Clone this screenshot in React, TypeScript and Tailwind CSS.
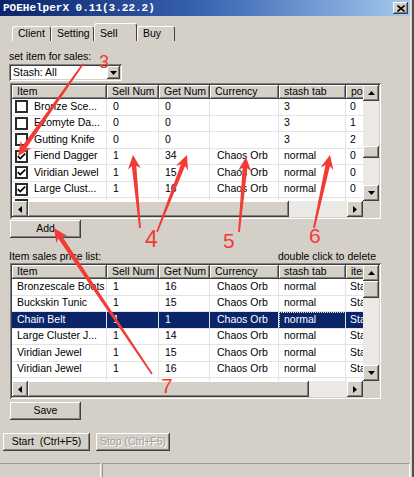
import React from "react";

const raised =
  "bg-[#d4d0c8] shadow-[inset_-1px_-1px_0_#404040,inset_1px_1px_0_#ffffff,inset_-2px_-2px_0_#808080]";
const sunken =
  "shadow-[inset_1px_1px_0_#808080,inset_-1px_-1px_0_#ffffff,inset_2px_2px_0_#404040,inset_-2px_-2px_0_#d4d0c8]";
const track = "bg-[#ebe9e5]";

const colW = ["w-[95px]", "w-[52px]", "w-[51px]", "w-[69px]", "w-[67px]", "w-[40px]"];
const colPad = ["pl-[5px]", "pl-[6px]", "pl-[6px]", "pl-[7px]", "pl-[5px]", "pl-[4px]"];

type Row = { cells: string[]; checked?: boolean; selected?: boolean; focus?: number };

const stashRows: Row[] = [
  { cells: ["Bronze Sce...", "0", "0", "", "3", "0"] },
  { cells: ["Ezomyte Da...", "0", "0", "", "3", "1"] },
  { cells: ["Gutting Knife", "0", "0", "", "3", "2"] },
  { cells: ["Fiend Dagger", "1", "34", "Chaos Orb", "normal", "0"], checked: true },
  { cells: ["Viridian Jewel", "1", "15", "Chaos Orb", "normal", "0"], checked: true },
  { cells: ["Large Clust...", "1", "16", "Chaos Orb", "normal", "0"], checked: true },
  { cells: ["Viridian Jewel", "1", "15", "Chaos Orb", "normal", "0"], checked: true },
];

const priceRows: Row[] = [
  { cells: ["Bronzescale Boots", "1", "16", "Chaos Orb", "normal", "Stash"] },
  { cells: ["Buckskin Tunic", "1", "15", "Chaos Orb", "normal", "Stash"] },
  { cells: ["Chain Belt", "1", "1", "Chaos Orb", "normal", "Stash"], selected: true, focus: 4 },
  { cells: ["Large Cluster J...", "1", "14", "Chaos Orb", "normal", "Stash"] },
  { cells: ["Viridian Jewel", "1", "15", "Chaos Orb", "normal", "Stash"] },
  { cells: ["Viridian Jewel", "1", "16", "Chaos Orb", "normal", "Stash"] },
  { cells: ["Fiend Dagger", "1", "34", "Chaos Orb", "normal", "Stash"] },
];

const Tri = ({ dir }: { dir: "up" | "down" | "left" | "right" }) => {
  const d = {
    up: "M3.5 0 L7 4 L0 4 Z",
    down: "M0 0 L7 0 L3.5 4 Z",
    left: "M0 3.5 L4 0 L4 7 Z",
    right: "M0 0 L4 3.5 L0 7 Z",
  }[dir];
  const horiz = dir === "left" || dir === "right";
  return (
    <svg width={horiz ? 4 : 7} height={horiz ? 7 : 4} viewBox={horiz ? "0 0 4 7" : "0 0 7 4"}>
      <path d={d} fill="#000" />
    </svg>
  );
};

const ScrollBtn = ({ dir }: { dir: "up" | "down" | "left" | "right" }) => (
  <div className={`w-[16px] h-[16px] shrink-0 flex items-center justify-center ${raised}`}>
    <Tri dir={dir} />
  </div>
);

const CheckBox = ({ checked }: { checked?: boolean }) => (
  <div className="w-[13px] h-[13px] shrink-0 border-2 border-[#2b2b2b] bg-white flex items-center justify-center">
    {checked && (
      <svg width="9" height="7" viewBox="0 0 9 7">
        <path d="M0.8 3.2 L3.2 5.6 L8.2 0.6" stroke="#000" strokeWidth="1.8" fill="none" />
      </svg>
    )}
  </div>
);

const ListTable = ({
  headers,
  rows,
  checks,
  gap,
  thumb,
  hThumb,
}: {
  headers: string[];
  rows: Row[];
  checks?: boolean;
  gap: string;
  thumb: string;
  hThumb: string;
}) => (
  <div className={`ml-[10px] w-[371px] h-[136px] p-[2px] bg-white flex flex-col ${sunken}`}>
    <div className="flex flex-1 min-h-0">
      <div className="flex-1 min-w-0 overflow-hidden flex flex-col">
        <div className="flex h-[14px] shrink-0">
          {headers.map((h, i) => (
            <div
              key={h}
              className={`${colW[i]} shrink-0 h-full flex items-center pl-[5px] overflow-hidden whitespace-nowrap ${raised}`}
            >
              {h}
            </div>
          ))}
        </div>
        {rows.map((r, ri) => (
          <div
            key={ri}
            className={`flex h-[16.5px] shrink-0 ${r.selected ? "bg-[#0a246a] text-white" : "bg-white text-black"}`}
          >
            {r.cells.map((c, i) => (
              <div
                key={i}
                className={`${colW[i]} shrink-0 h-full flex items-center border-r border-b border-[#e3e3e3] overflow-hidden whitespace-nowrap ${
                  i === 0 && checks ? "pl-[3px] gap-[6px]" : colPad[i]
                } ${r.focus === i ? "outline-1 outline-dotted outline-[#e8e4b0] -outline-offset-1" : ""}`}
              >
                {i === 0 && checks && <CheckBox checked={r.checked} />}
                {c}
              </div>
            ))}
          </div>
        ))}
      </div>
      <div className="w-[16px] shrink-0 flex flex-col">
        <ScrollBtn dir="up" />
        <div className={`flex-1 flex flex-col ${track}`}>
          <div className={gap} />
          <div className={`${thumb} ${raised}`} />
        </div>
        <ScrollBtn dir="down" />
      </div>
    </div>
    <div className="flex h-[16px] shrink-0">
      <ScrollBtn dir="left" />
      <div className={`${hThumb} ${raised}`} />
      <div className={`flex-1 ${track}`} />
      <ScrollBtn dir="right" />
      <div className="w-[16px] bg-[#d4d0c8]" />
    </div>
  </div>
);

const Button = ({ w, children, disabled }: { w: string; children: React.ReactNode; disabled?: boolean }) => (
  <div
    className={`${w} h-[18px] flex items-center justify-center whitespace-pre ${raised} ${
      disabled ? "text-[#a0a0a0] [text-shadow:1px_1px_0_#ffffff]" : "text-black"
    }`}
  >
    {children}
  </div>
);

const Tab = ({ label, w, active }: { label: string; w: string; active?: boolean }) => (
  <div
    className={`${w} flex pl-[5px] rounded-t-[3px] border-t border-l border-white border-r border-r-[#404040] bg-[#d4d0c8] ${
      active ? "h-[18px] items-start pt-[2px] z-10" : "h-[15px] items-center"
    }`}
  >
    {label}
  </div>
);

function arrow(x1: number, y1: number, x2: number, y2: number) {
  const dx = x2 - x1;
  const dy = y2 - y1;
  const len = Math.hypot(dx, dy);
  const ux = dx / len;
  const uy = dy / len;
  const nx = -uy;
  const ny = ux;
  const headLen = 14;
  const headW = 6.5;
  const w0 = 0.9;
  const w1 = 2.3;
  const hx = x2 - ux * headLen;
  const hy = y2 - uy * headLen;
  const bx = x2 - ux * (headLen - 3);
  const by = y2 - uy * (headLen - 3);
  const pts = [
    [x1 + nx * w0, y1 + ny * w0],
    [bx + nx * w1, by + ny * w1],
    [hx + nx * headW, hy + ny * headW],
    [x2, y2],
    [hx - nx * headW, hy - ny * headW],
    [bx - nx * w1, by - ny * w1],
    [x1 - nx * w0, y1 - ny * w0],
  ];
  return pts.map((p) => `${p[0].toFixed(1)},${p[1].toFixed(1)}`).join(" ");
}

const arrows: [number, number, number, number][] = [
  [83, 64, 18, 156],
  [140, 228, 133, 155],
  [157, 232, 187, 155],
  [239, 232, 246, 157],
  [314, 228, 330, 155],
  [152, 374, 54, 228],
];

const labels = [
  { t: "3", x: 99, y: 68, s: 18 },
  { t: "4", x: 145, y: 247, s: 23 },
  { t: "5", x: 223, y: 248, s: 21 },
  { t: "6", x: 309, y: 243, s: 21 },
  { t: "7", x: 161, y: 393, s: 21 },
];

export default function App() {
  return (
    <div className="relative w-[414px] h-[477px] overflow-hidden bg-[#d4d0c8] flex font-['Liberation_Sans',Arial,sans-serif] text-[10.5px] text-black">
      <div className="w-[410px] flex flex-col">
        {/* title bar */}
        <div className="h-[16px] shrink-0 flex items-center justify-between pl-[3px] pr-[2px] bg-linear-to-r from-[#0a246a] via-[#3a64b0] to-[#a6caf0]">
          <span className="font-['Liberation_Mono',monospace] font-bold text-[11px] text-white leading-none">
            POEHelperX 0.11(3.22.2)
          </span>
          <div className={`w-[15px] h-[12px] flex items-center justify-center ${raised}`}>
            <svg width="8" height="7" viewBox="0 0 8 7">
              <path d="M0.5 0.5 L7.5 6.5 M7.5 0.5 L0.5 6.5" stroke="#000" strokeWidth="1.6" />
            </svg>
          </div>
        </div>

        {/* tabs */}
        <div className="h-[25px] shrink-0 flex items-end pl-[12px]">
          <Tab label="Client" w="w-[39px]" />
          <Tab label="Setting" w="w-[43px]" />
          <Tab label="Sell" w="w-[43px]" active />
          <Tab label="Buy" w="w-[38px]" />
        </div>

        <div className="mt-[9px] h-[13px] pl-[9px] flex items-center">set item for sales:</div>

        {/* combo */}
        <div className={`mt-[1px] ml-[9px] w-[113px] h-[17px] p-[2px] bg-white flex ${sunken}`}>
          <div className="flex-1 flex items-center pl-[2px]">Stash: All</div>
          <div className={`w-[13px] h-full flex items-center justify-center ${raised}`}>
            <Tri dir="down" />
          </div>
        </div>

        <div className="mt-[2px]">
          <ListTable
            headers={["Item", "Sell Num", "Get Num", "Currency", "stash tab", "pos"]}
            rows={stashRows}
            checks
            gap="h-[45px]"
            thumb="h-[12px]"
            hThumb="w-[261px]"
          />
        </div>

        <div className="mt-[1px] ml-[10px]">
          <Button w="w-[71px]">Add</Button>
        </div>

        <div className="mt-[12px] h-[13px] flex items-center justify-between pl-[9px] pr-[34px]">
          <span>Item sales price list:</span>
          <span>double click to delete</span>
        </div>

        <ListTable
          headers={["Item", "Sell Num", "Get Num", "Currency", "stash tab", "item id"]}
          rows={priceRows}
          gap="h-0"
          thumb="h-[17px]"
          hThumb="w-[281px]"
        />

        <div className="mt-[3px] ml-[10px]">
          <Button w="w-[71px]">Save</Button>
        </div>

        <div className="mt-[13px] ml-[3px] flex gap-[6px]">
          <Button w="w-[87px]">{"Start  (Ctrl+F5)"}</Button>
          <Button w="w-[74px]" disabled>
            Stop (Ctrl+F6)
          </Button>
        </div>

        {/* status bar */}
        <div className="mt-[12px] flex-1 flex gap-[1px]">
          <div className="w-[101px] border-t border-[#9c9890] border-r border-r-white" />
          <div className="flex-1 border-t border-l border-[#9c9890] border-r border-r-white" />
        </div>
      </div>

      {/* window edge */}
      <div className="w-[4px] bg-[#d4d0c8] border-l border-[#e8e6e2] border-r-2 border-r-[#505050]" />

      {/* red annotations */}
      <svg className="absolute inset-0 pointer-events-none" width="414" height="477" viewBox="0 0 414 477">
        {arrows.map((a, i) => (
          <polygon key={i} points={arrow(a[0], a[1], a[2], a[3])} fill="#f23b36" />
        ))}
        {labels.map((l) => (
          <text
            key={l.t}
            x={l.x}
            y={l.y}
            fontSize={l.s}
            fill="#f23b36"
            fontFamily="'Liberation Sans', Arial, sans-serif"
          >
            {l.t}
          </text>
        ))}
      </svg>
    </div>
  );
}
